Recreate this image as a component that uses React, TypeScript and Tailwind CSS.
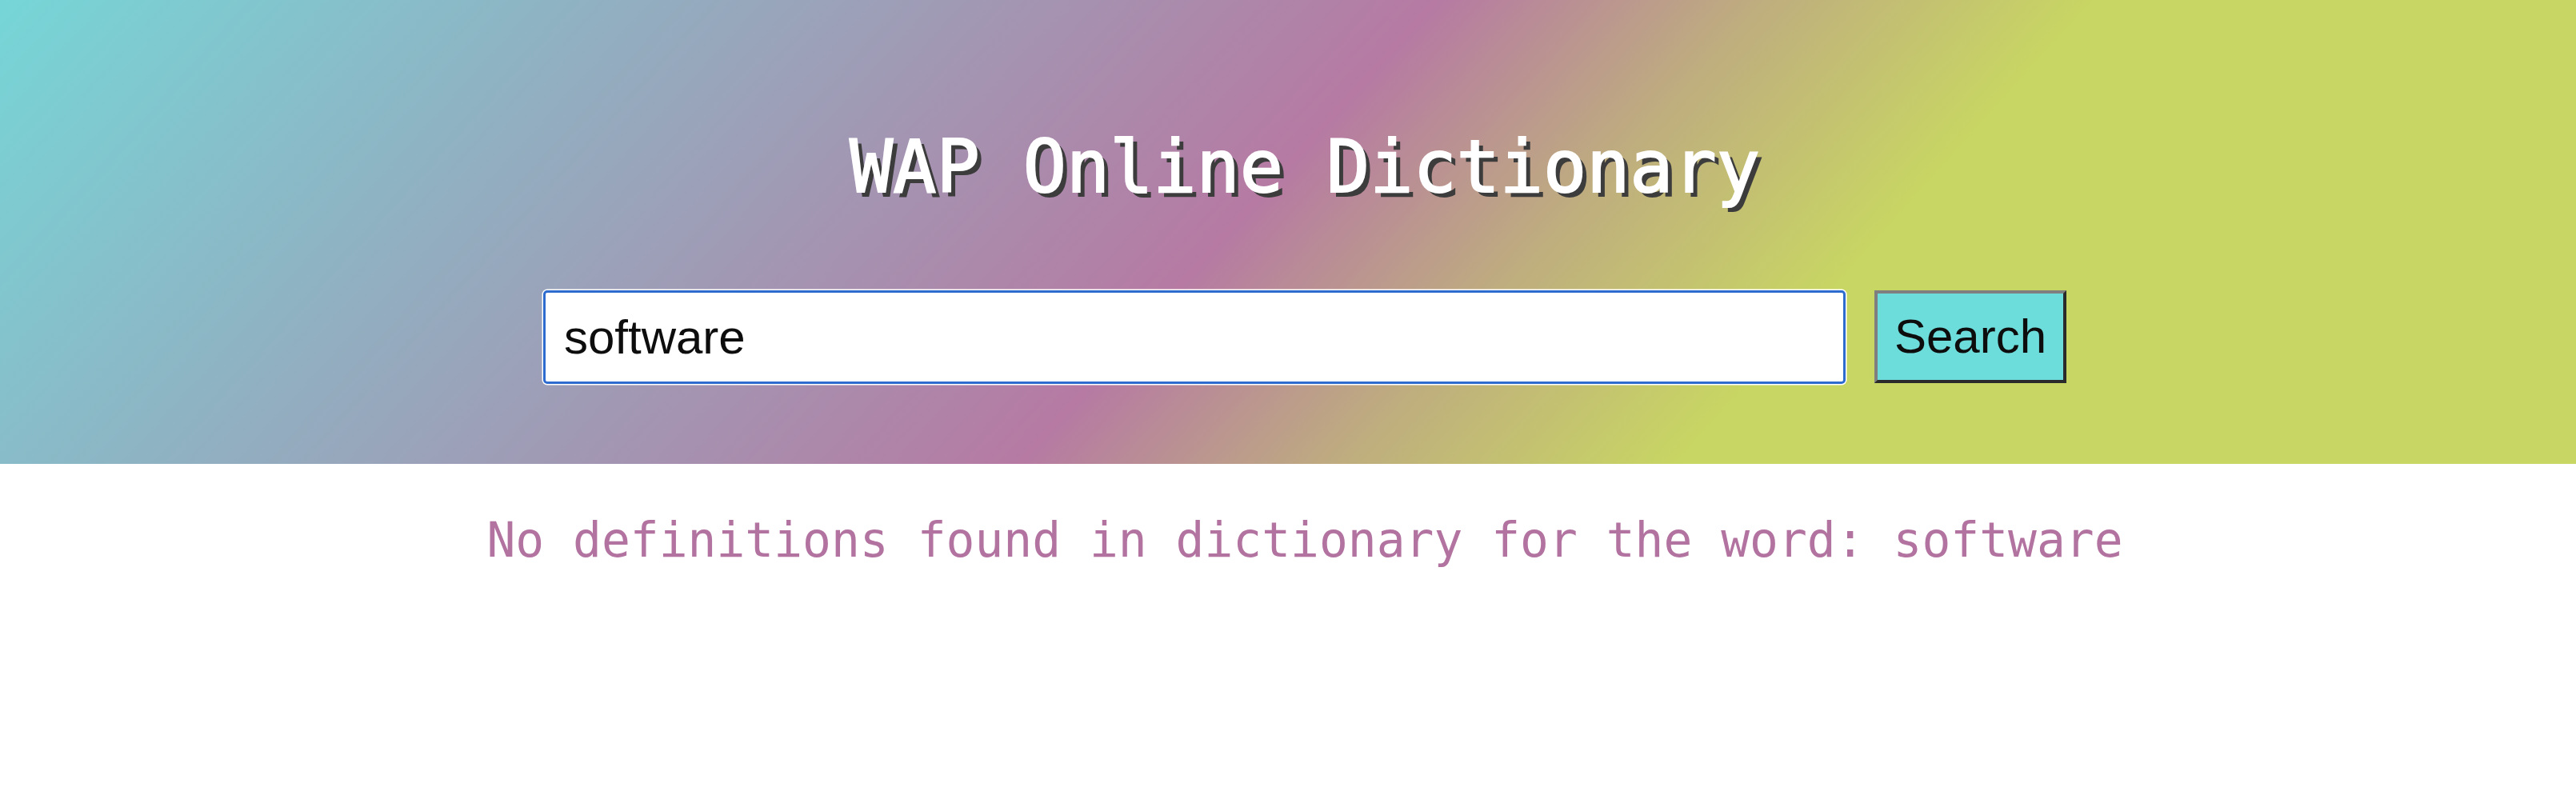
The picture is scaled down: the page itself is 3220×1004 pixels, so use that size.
import { useState } from "react";

export default function App() {
  const [word, setWord] = useState("software");

  return (
    <div className="min-h-screen bg-white">
      <header className="h-[580px] pl-[42px] pt-[164px] flex flex-col items-center bg-[linear-gradient(132deg,#76d6d7_0%,#9ca0b8_29%,#b67aa3_48%,#bfae7e_59%,#c8d663_70%,#c8d663_100%)]">
        <h1 className="text-[90px] leading-none font-normal text-white font-['DejaVu_Sans_Mono','Liberation_Mono',monospace] [-webkit-text-stroke:2px_#ffffff] [text-shadow:6px_6px_0_#3c3c3c]">
          WAP Online Dictionary
        </h1>

        <form
          className="mt-[109px] flex items-start gap-[36px]"
          onSubmit={(e) => e.preventDefault()}
        >
          <input
            value={word}
            onChange={(e) => setWord(e.target.value)}
            className="w-[1628px] h-[117px] bg-white border-[3px] border-[#2d6bcf] rounded-[5px] shadow-[0_0_0_1.5px_#ffffff] pl-[23px] pr-[21px] text-[60px] text-[#0d0d0d] font-['Liberation_Sans',Arial,sans-serif] outline-none"
          />
          <button
            type="submit"
            className="h-[116px] px-[21px] bg-[#6ddddb] border-4 border-t-[#7f7f7f] border-l-[#7f7f7f] border-b-[#2b2b2b] border-r-[#2b2b2b] text-[60px] leading-none text-[#0d0d0d] font-['Liberation_Sans',Arial,sans-serif]"
          >
            Search
          </button>
        </form>
      </header>

      <main className="pl-[42px] pt-[66px] flex justify-center">
        <p className="text-[59.6px] leading-none text-[#b273a0] font-['DejaVu_Sans_Mono','Liberation_Mono',monospace]">
          No definitions found in dictionary for the word: {word}
        </p>
      </main>
    </div>
  );
}
